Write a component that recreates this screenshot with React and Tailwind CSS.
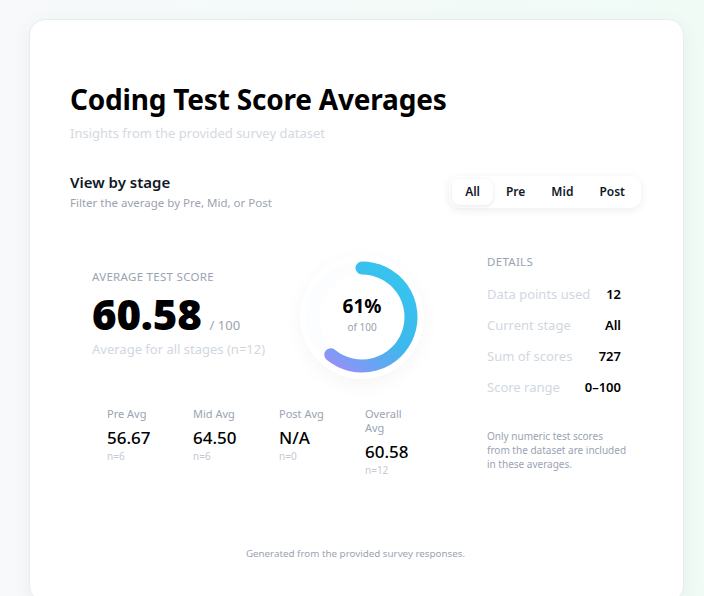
import React, { useState } from "react";

const stats = [
  { label: "Pre Avg", value: "56.67", n: "n=6" },
  { label: "Mid Avg", value: "64.50", n: "n=6" },
  { label: "Post Avg", value: "N/A", n: "n=0" },
  { label: "Overall Avg", value: "60.58", n: "n=12" },
];

const details = [
  { label: "Data points used", value: "12" },
  { label: "Current stage", value: "All" },
  { label: "Sum of scores", value: "727" },
  { label: "Score range", value: "0–100" },
];

const Ring = ({ pct }) => {
  const size = 124;
  const cx = size / 2;
  const r = 49;
  const angle = (pct / 100) * 2 * Math.PI;
  const ex = cx + r * Math.sin(angle);
  const ey = cx - r * Math.cos(angle);
  const large = pct > 50 ? 1 : 0;
  return (
    <div className="relative w-[124px] h-[124px] rounded-full bg-white shadow-[0_6px_20px_rgba(15,23,42,0.04)] flex items-center justify-center">
      <svg width={size} height={size} viewBox={`0 0 ${size} ${size}`} className="absolute inset-0">
        <defs>
          <linearGradient id="ringGrad" gradientUnits="userSpaceOnUse" x1={cx + 10} y1={cx - r} x2={cx - r} y2={cx + r - 6}>
            <stop offset="0%" stopColor="#38c2ee" />
            <stop offset="45%" stopColor="#3db8ec" />
            <stop offset="75%" stopColor="#6aa3f3" />
            <stop offset="100%" stopColor="#a48bf7" />
          </linearGradient>
        </defs>
        <circle cx={cx} cy={cx} r={r} fill="none" stroke="#fcfdfe" strokeWidth="13" />
        <path
          d={`M ${cx} ${cx - r} A ${r} ${r} 0 ${large} 1 ${ex} ${ey}`}
          fill="none"
          stroke="url(#ringGrad)"
          strokeWidth="13"
          strokeLinecap="round"
        />
      </svg>
      <div className="relative text-center leading-none -mt-[4px]">
        <div className="text-[19px] font-bold text-black">61%</div>
        <div className="text-[10px] text-gray-400 mt-[6px]">of 100</div>
      </div>
    </div>
  );
};

const App = () => {
  const [stage, setStage] = useState("All");

  return (
    <div className="min-h-screen bg-gradient-to-r from-[#f7f9fb] to-[#f0fbf6] pl-[29px] pr-[20px] pt-[19px] font-['Noto_Sans',sans-serif]">
      <div className="bg-white rounded-[16px] border border-[#e8edf2] shadow-[0_4px_20px_rgba(15,23,42,0.05)] pl-[40px] pr-[42px] pt-[62px] pb-[40px]">
        <h1 className="text-[28px] font-bold text-black leading-[34px] tracking-[-0.2px]">
          Coding Test Score Averages
        </h1>
        <p className="text-[13px] text-[#d3d9e1] mt-[8px]">Insights from the provided survey dataset</p>

        <div className="flex items-start justify-between mt-[28px]">
          <div>
            <h2 className="text-[15px] font-semibold text-[#111827] leading-[20px]">View by stage</h2>
            <p className="text-[11.5px] text-[#9ca3af] mt-[2px]">Filter the average by Pre, Mid, or Post</p>
          </div>
          <div className="flex items-center bg-white rounded-[10px] shadow-[0_2px_8px_rgba(15,23,42,0.08)] p-[3px] mt-[4px]">
            {["All", "Pre", "Mid", "Post"].map((s) => (
              <button
                key={s}
                onClick={() => setStage(s)}
                className={
                  stage === s
                    ? "h-[26px] px-[13px] rounded-[8px] text-[12px] font-semibold text-[#111827] bg-white shadow-[0_1px_4px_rgba(15,23,42,0.1)]"
                    : "h-[26px] px-[13px] rounded-[8px] text-[12px] font-semibold text-[#111827]"
                }
              >
                {s}
              </button>
            ))}
          </div>
        </div>

        <div className="flex mt-[24px]">
          <div className="w-[380px]">
            <div className="flex items-center px-[22px] pt-[20px]">
              <div className="w-[208px] pb-[6px]">
                <div className="text-[11.5px] uppercase tracking-[0.3px] text-[#9aa3b2]">Average Test Score</div>
                <div className="flex items-baseline mt-[4px]">
                  <span className="text-[42px] font-black text-black leading-[48px] tracking-[-0.2px]">60.58</span>
                  <span className="text-[13px] text-[#9ca3af] ml-[8px]">/ 100</span>
                </div>
                <div className="text-[13px] text-[#d1d7df] mt-[2px]">Average for all stages (n=12)</div>
              </div>
              <Ring pct={61} />
            </div>

            <div className="grid grid-cols-4 gap-[8px] px-[22px] mt-[28px]">
              {stats.map((s) => (
                <div key={s.label} className="px-[15px]">
                  <div className="text-[11px] text-[#9aa3b2] leading-[14px]">{s.label}</div>
                  <div className="text-[17px] font-medium text-black leading-[22px] mt-[6px]">{s.value}</div>
                  <div className="text-[10px] text-[#c4cad3] leading-[14px]">{s.n}</div>
                </div>
              ))}
            </div>
          </div>

          <div className="ml-[37px] w-[134px] mt-[18px]">
            <div className="text-[11.5px] uppercase tracking-[0.3px] text-[#9aa3b2]">Details</div>
            <div className="mt-[15px] flex flex-col gap-[13px]">
              {details.map((d) => (
                <div key={d.label} className="flex items-center justify-between leading-[18px]">
                  <span className="text-[13px] text-[#d1d7df]">{d.label}</span>
                  <span className="text-[13px] font-semibold text-black">{d.value}</span>
                </div>
              ))}
            </div>
            <p className="w-[150px] text-[10px] leading-[14px] text-[#9aa3b2] mt-[33px]">
              Only numeric test scores
              <br />
              from the dataset are included
              <br />
              in these averages.
            </p>
          </div>
        </div>

        <p className="text-center text-[9.8px] text-[#9aa3b2] mt-[70px]">
          Generated from the provided survey responses.
        </p>
      </div>
    </div>
  );
};

export default App;
